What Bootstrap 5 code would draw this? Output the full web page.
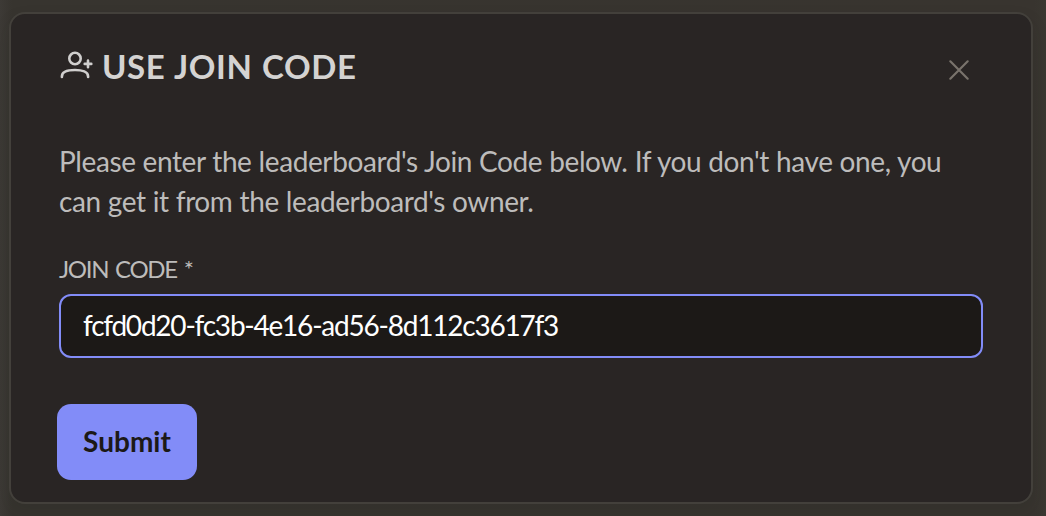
<!DOCTYPE html>
<html lang="en">
<head>
    <meta charset="UTF-8">
    <meta name="viewport" content="width=device-width, initial-scale=1.0">
    <title>Use Join Code</title>
    <link href="https://cdn.jsdelivr.net/npm/bootstrap@5.3.0/dist/css/bootstrap.min.css" rel="stylesheet">
    <style>
        body {
            height: 516px;
            overflow: hidden;
            padding: 12px 13px 12px 9px;
            background: linear-gradient(90deg, #3d3a36 0, #37342f 12px, #38342f 1034px, #3a3731 100%);
            font-family: Lato, sans-serif;
        }
        .join-card {
            height: 492px;
            padding: 32px 48px 22px;
            background-color: #292524;
            border: 2px solid #43403b;
            border-radius: 16px;
            box-shadow: 0 8px 16px rgba(30, 35, 25, 0.15);
            color: #bdbcbb;
        }
        .join-header {
            height: 40px;
            margin-bottom: 55px;
        }
        .join-title {
            font-size: 33px;
            line-height: 40px;
            letter-spacing: 0.6px;
            word-spacing: 1px;
            color: #d4d3d2;
        }
        .join-close {
            width: 24px;
            height: 24px;
            margin: 11px 12px 0 0;
            color: #79736c;
        }
        .join-text {
            font-size: 28px;
            line-height: 40px;
            margin-bottom: 33px;
            letter-spacing: -0.4px;
            word-spacing: 0.3px;
        }
        .join-label {
            font-size: 24px;
            line-height: 30px;
            margin-bottom: 10px;
            letter-spacing: -1.3px;
            word-spacing: 2px;
        }
        .join-input,
        .join-input:focus {
            height: 64px;
            padding: 0 22px 3px;
            background-color: #1c1917;
            border: 2px solid #828cf8;
            border-radius: 12px;
            box-shadow: none;
            color: #fff;
            font-size: 28px;
            letter-spacing: -1.22px;
        }
        .join-submit {
            width: 140px;
            height: 76px;
            margin: 46px 0 0 -2px;
            padding: 0 0 3px;
            background-color: #828cf8;
            border: 0;
            border-radius: 14px;
            color: #1c1917;
            font-size: 28px;
            font-weight: 700;
        }
    </style>
</head>
<body>
    <div class="card join-card">
        <div class="join-header d-flex align-items-start justify-content-between">
            <div class="d-flex">
                <svg width="43" height="40" viewBox="0 0 43 40" fill="none" stroke="#d0cfce" stroke-width="2.6" stroke-linecap="round">
                    <circle cx="16" cy="12.5" r="5.7"/>
                    <path d="M2.9 31v-.6C2.9 25.9 8.8 24 16 24s13.1 1.9 13.1 6.4v.6M29 14.6v6.6M25.7 17.9h6.6"/>
                </svg>
                <h1 class="join-title fw-bold text-uppercase mb-0">Use Join Code</h1>
            </div>
            <button type="button" class="join-close btn p-0 border-0 d-flex" aria-label="Close">
                <svg width="24" height="24" viewBox="0 0 24 24" fill="none" stroke="currentColor" stroke-width="2.2" stroke-linecap="round">
                    <path d="M3.3 4.3l17.4 17.4M20.7 4.3L3.3 21.7"/>
                </svg>
            </button>
        </div>
        <form>
            <p class="join-text text-nowrap">Please enter the leaderboard's Join Code below. If you don't have one, you<br>can get it from the leaderboard's owner.</p>
            <label for="joinCode" class="join-label text-uppercase d-block">Join Code *</label>
            <input type="text" class="form-control join-input" id="joinCode" value="fcfd0d20-fc3b-4e16-ad56-8d112c3617f3" spellcheck="false">
            <button type="submit" class="btn join-submit">Submit</button>
        </form>
    </div>
    <script src="https://cdn.jsdelivr.net/npm/bootstrap@5.3.0/dist/js/bootstrap.bundle.min.js"></script>
</body>
</html>
